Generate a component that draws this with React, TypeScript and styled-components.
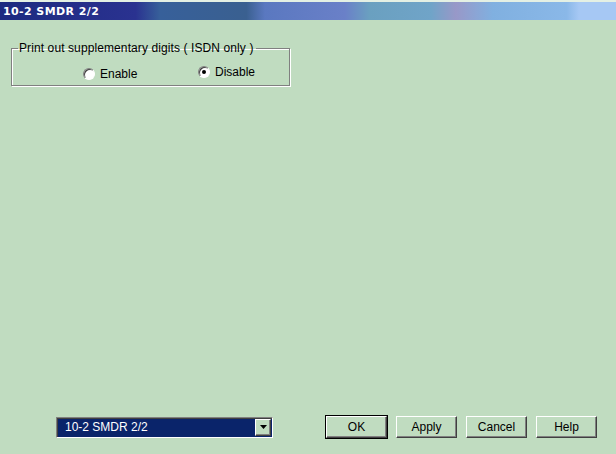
import React from "react";
import styled, { createGlobalStyle } from "styled-components";

const Global = createGlobalStyle`
  html, body { margin: 0; padding: 0; background: #c0dcc0; }
  body { font-family: "Liberation Sans", Arial, sans-serif; font-size: 12px; color: #000; }
`;

const Window = styled.div`
  width: 616px;
  height: 454px;
  background: #c0dcc0;
  display: flex;
  flex-direction: column;
  box-sizing: border-box;
  padding-top: 2px;
  position: relative;
  overflow: hidden;
`;

const TopLine = styled.div`
  position: absolute;
  left: 0; top: 0; right: 0; height: 2px;
  background: #e4f0e4;
`;

const TitleBar = styled.div`
  height: 18px;
  display: flex;
  align-items: center;
  padding-left: 3px;
  background: linear-gradient(
    to right,
    #1c2a80 0%,
    #2a3290 22%,
    #37609a 26%,
    #3a6090 40%,
    #5a78c0 43%,
    #6a80c8 56%,
    #6aa0c0 60%,
    #70a4c8 70%,
    #9898c8 74%,
    #80b0e0 80%,
    #8ab8e8 92%,
    #a6c8f4 94%,
    #a6c8f4 100%
  );
  color: #fff;
  font-family: "DejaVu Sans", Tahoma, sans-serif;
  font-weight: bold;
  font-size: 11px;
  letter-spacing: 0.4px;
`;

const Body = styled.div`
  flex: 1;
  display: flex;
  flex-direction: column;
  padding: 0 0 0 11px;
`;

const Group = styled.fieldset`
  margin: 22px 0 0 0;
  width: 279px;
  height: 44px;
  box-sizing: border-box;
  border: 1px solid #808080;
  box-shadow: 1px 1px 0 #ffffff, inset 1px 1px 0 #ffffff;
  padding: 0;
`;

const Legend = styled.legend`
  padding: 0 2px 0 1px;
  margin-left: 6px;
  font-size: 12px;
  line-height: 12px;
  color: #000;
  letter-spacing: 0.1px;
`;

const RadioRow = styled.div`
  display: flex;
  align-items: flex-start;
  padding-left: 71px;
`;

const RadioLabel = styled.label<{ $dy: number; $w: number }>`
  display: flex;
  align-items: center;
  gap: 5px;
  width: ${(p) => p.$w}px;
  margin-top: ${(p) => p.$dy}px;
  font-size: 12px;
`;

const RadioCircle = styled.span<{ $on?: boolean }>`
  width: 12px;
  height: 12px;
  box-sizing: border-box;
  border-radius: 50%;
  background: #fff;
  border: 1px solid;
  border-color: #808080 #ffffff #ffffff #808080;
  box-shadow: inset 1px 1px 0 #404040;
  display: flex;
  align-items: center;
  justify-content: center;
  &::after {
    content: "";
    width: 4px;
    height: 4px;
    border-radius: 50%;
    background: ${(p) => (p.$on ? "#000" : "transparent")};
  }
`;

const Spacer = styled.div`
  flex: 1;
`;

const Footer = styled.div`
  display: flex;
  align-items: center;
  height: 22px;
  margin-bottom: 16px;
  padding-left: 45px;
`;

const Select = styled.div`
  width: 217px;
  height: 21px;
  box-sizing: border-box;
  border: 1px solid;
  border-color: #808080 #ffffff #ffffff #808080;
  background: #0a246a;
  box-shadow: inset 1px 1px 0 #404040;
  display: flex;
  align-items: center;
  padding: 0 1px 0 0;
`;

const SelectText = styled.span`
  flex: 1;
  color: #fff;
  font-size: 12px;
  padding-left: 8px;
`;

const DropBtn = styled.div`
  width: 16px;
  height: 17px;
  box-sizing: border-box;
  background: #c0dcc0;
  border: 1px solid;
  border-color: #ffffff #404040 #404040 #ffffff;
  box-shadow: inset -1px -1px 0 #808080;
  display: flex;
  align-items: center;
  justify-content: center;
`;

const Buttons = styled.div`
  display: flex;
  gap: 9px;
  margin-left: 53px;
`;

const Button = styled.button<{ $default?: boolean }>`
  width: 61px;
  height: 22px;
  box-sizing: border-box;
  background: #c0dcc0;
  font-family: "Liberation Sans", Arial, sans-serif;
  font-size: 12px;
  color: #000;
  padding: 0;
  border: 1px solid;
  border-color: #ffffff #404040 #404040 #ffffff;
  box-shadow: inset -1px -1px 0 #808080;
  ${(p) => (p.$default ? `outline: 1px solid #000; outline-offset: 0;` : "")}
`;

export default function App() {
  return (
    <>
      <Global />
      <Window>
        <TopLine />
        <TitleBar>10-2 SMDR 2/2</TitleBar>
        <Body>
          <Group>
            <Legend>Print out supplementary digits ( ISDN only )</Legend>
            <RadioRow>
              <RadioLabel $dy={13} $w={115}>
                <RadioCircle />
                Enable
              </RadioLabel>
              <RadioLabel $dy={11} $w={80}>
                <RadioCircle $on />
                Disable
              </RadioLabel>
            </RadioRow>
          </Group>
          <Spacer />
          <Footer>
            <Select>
              <SelectText>10-2 SMDR 2/2</SelectText>
              <DropBtn>
                <svg width="7" height="4" viewBox="0 0 7 4">
                  <path d="M0 0h7L3.5 4z" fill="#000" />
                </svg>
              </DropBtn>
            </Select>
            <Buttons>
              <Button $default>OK</Button>
              <Button>Apply</Button>
              <Button>Cancel</Button>
              <Button>Help</Button>
            </Buttons>
          </Footer>
        </Body>
      </Window>
    </>
  );
}
